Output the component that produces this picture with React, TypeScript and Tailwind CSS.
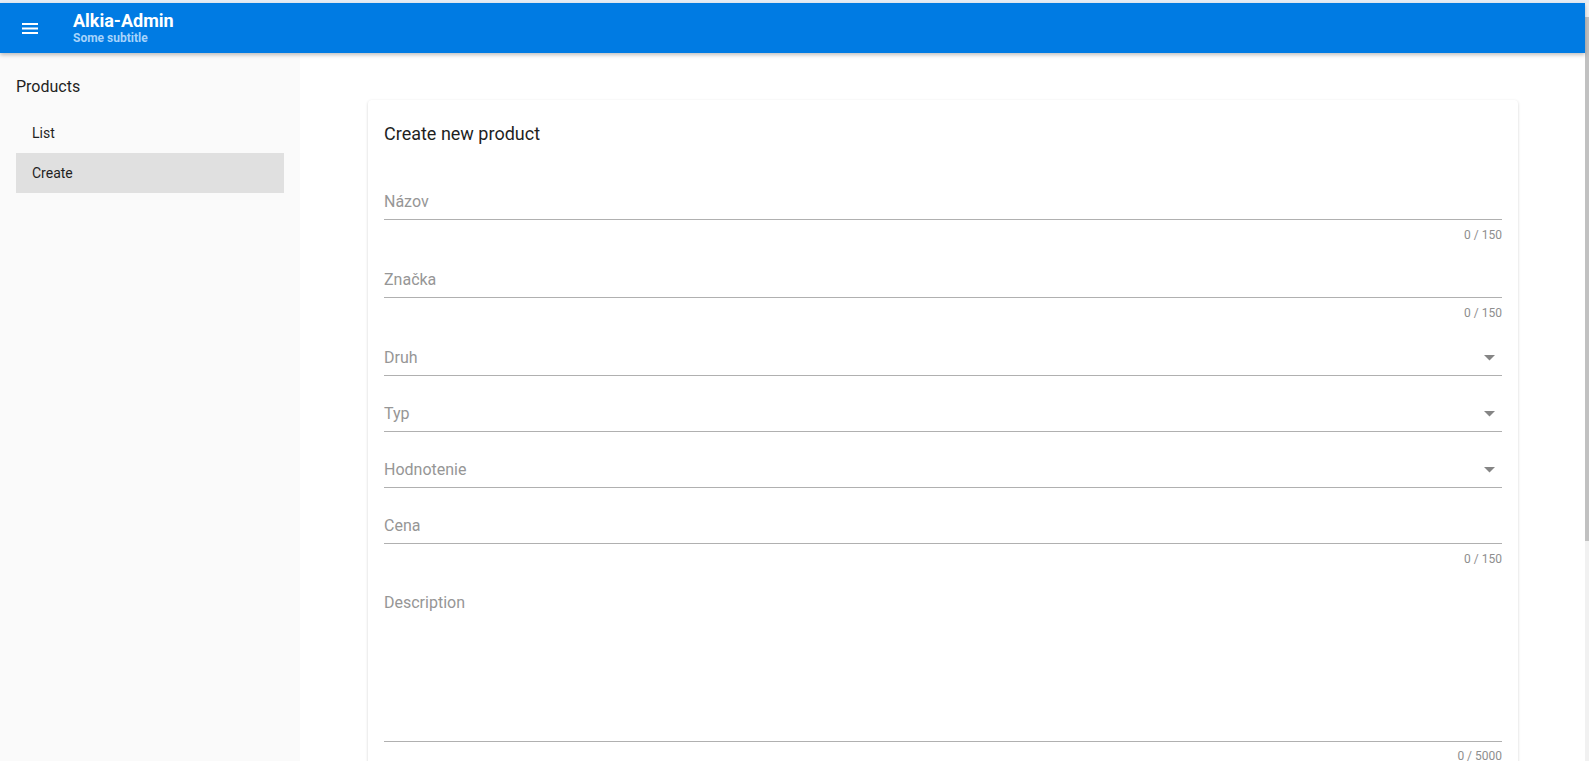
import React from 'react'

type Field = {
  label: string
  counter?: string
  select?: boolean
}

const fields: Field[] = [
  { label: 'Názov', counter: '0 / 150' },
  { label: 'Značka', counter: '0 / 150' },
  { label: 'Druh', select: true },
  { label: 'Typ', select: true },
  { label: 'Hodnotenie', select: true },
  { label: 'Cena', counter: '0 / 150' },
]

const font = { fontFamily: 'Roboto, "Noto Sans", sans-serif' }

const MenuIcon = () => (
  <svg width="16" height="11" viewBox="0 0 16 11" fill="white">
    <rect x="0" y="0" width="16" height="2" />
    <rect x="0" y="4.5" width="16" height="2" />
    <rect x="0" y="9" width="16" height="2" />
  </svg>
)

const Caret = () => (
  <svg width="11" height="6" viewBox="0 0 11 6" className="mr-[7px]">
    <path d="M0 0h11L5.5 5.5z" fill="#858585" />
  </svg>
)

const TextField = ({ label, counter, select }: Field) => (
  <div className={counter ? 'h-[78px]' : 'h-[56px]'}>
    <div className="flex h-[32px] items-center justify-between border-b border-[#b0b0b0] pb-[4px]">
      <span className="text-[16px] leading-[24px] text-[#969696]">{label}</span>
      {select && <Caret />}
    </div>
    {counter && (
      <div className="pt-[7px] text-right text-[12px] leading-[16px] text-[#8e8e8e]">{counter}</div>
    )}
  </div>
)

export default function App() {
  return (
    <div className="flex h-[761px] w-[1589px] flex-col overflow-hidden bg-white" style={font}>
      <div className="h-[3px] shrink-0 bg-[#e6edf6]" />
      <div className="flex min-h-0 flex-1">
        <div className="relative flex min-w-0 flex-1 flex-col">
          <header className="relative z-10 flex h-[50px] shrink-0 items-center bg-[#007be3] shadow-[0_2px_4px_rgba(0,0,0,0.25)]">
            <div className="ml-[22px] flex w-[51px] items-center">
              <MenuIcon />
            </div>
            <div className="flex flex-col">
              <span className="text-[18px] font-bold leading-[20px] text-white">Alkia-Admin</span>
              <span className="text-[12px] font-bold leading-[14px] text-[#a6d3fb]">Some subtitle</span>
            </div>
          </header>
          <div className="flex min-h-0 flex-1">
            <aside className="w-[300px] shrink-0 bg-[#fafafa] pt-[23px]">
              <div className="px-[16px] text-[16px] leading-[22px] text-[#1f1f1f]">Products</div>
              <nav className="mt-[15px] flex flex-col pl-[16px] pr-[16px]">
                <a className="flex h-[40px] items-center px-[16px] text-[14px] text-[#1f1f1f]">List</a>
                <a className="flex h-[40px] items-center bg-[#e0e0e0] px-[16px] text-[14px] text-[#1f1f1f]">
                  Create
                </a>
              </nav>
            </aside>
            <main className="min-w-0 flex-1 pl-[68px] pr-[67px] pt-[47px]">
              <div className="rounded-[4px] bg-white px-[16px] pt-[21px] shadow-[0_1px_3px_rgba(0,0,0,0.18)]">
                <h1 className="text-[18px] leading-[26px] text-[#1f1f1f]">Create new product</h1>
                <div className="mt-[41px]">
                  {fields.map((f) => (
                    <TextField key={f.label} {...f} />
                  ))}
                  <div className="h-[152px] border-b border-[#b0b0b0] pt-[1px]">
                    <span className="text-[16px] leading-[24px] text-[#969696]">Description</span>
                  </div>
                  <div className="pt-[6px] text-right text-[12px] leading-[16px] text-[#8e8e8e]">0 / 5000</div>
                  <div className="h-[40px]" />
                </div>
              </div>
            </main>
          </div>
        </div>
        <div className="flex w-[4px] shrink-0 flex-col bg-[#f1f1f1]">
          <div className="h-[14px]" />
          <div className="h-[524px] bg-[#c1c1c1]" />
        </div>
      </div>
    </div>
  )
}
